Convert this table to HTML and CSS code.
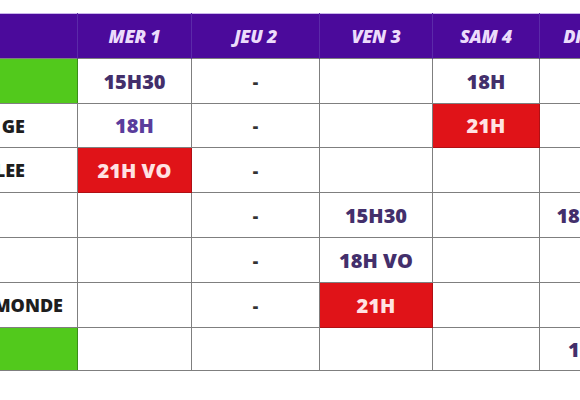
FILE: index.html
```html
<!DOCTYPE html>
<html lang="fr">
<head>
<meta charset="utf-8">
<title>Programme</title>
<link rel="stylesheet" href="styles.css">
</head>
<body>
<div class="frame">
  <table class="sched">
    <colgroup>
      <col class="c-title"><col class="c-mer"><col class="c-jeu"><col class="c-ven"><col class="c-sam"><col class="c-dim">
    </colgroup>
    <thead>
      <tr class="r-head">
        <th></th><th>MER 1</th><th>JEU 2</th><th>VEN 3</th><th>SAM 4</th><th>DIM 5</th>
      </tr>
    </thead>
    <tbody>
      <tr class="r1">
        <td class="title green"></td><td>15H30</td><td class="dash">-</td><td></td><td>18H</td><td></td>
      </tr>
      <tr class="r2">
        <td class="title">GE</td><td class="violet">18H</td><td class="dash">-</td><td></td><td class="red">21H</td><td></td>
      </tr>
      <tr class="r3">
        <td class="title">LEE</td><td class="red">21H VO</td><td class="dash">-</td><td></td><td></td><td></td>
      </tr>
      <tr class="r4">
        <td class="title"></td><td></td><td class="dash">-</td><td>15H30</td><td></td><td>18H30</td>
      </tr>
      <tr class="r5">
        <td class="title"></td><td></td><td class="dash">-</td><td>18H VO</td><td></td><td></td>
      </tr>
      <tr class="r6">
        <td class="title title-wide">MONDE</td><td></td><td class="dash">-</td><td class="red">21H</td><td></td><td></td>
      </tr>
      <tr class="r7">
        <td class="title green"></td><td></td><td></td><td></td><td></td><td>11H</td>
      </tr>
    </tbody>
  </table>
</div>
</body>
</html>
```

FILE: styles.css
```css
html, body {
  margin: 0;
  padding: 0;
  background: #ffffff;
}
body {
  width: 580px;
  height: 400px;
  overflow: hidden;
  font-family: "Open Sans", "Liberation Sans", sans-serif;
}
.frame {
  padding-top: 13px;
  margin-left: -80px;
}
.sched {
  table-layout: fixed;
  border-collapse: collapse;
  width: 715px;
}
.c-title { width: 157px; }
.c-mer { width: 114px; }
.c-jeu { width: 128px; }
.c-ven { width: 113px; }
.c-sam { width: 107px; }
.c-dim { width: 96px; }

.sched th {
  background: #4b0a9b;
  color: #ecdcfb;
  font-style: italic;
  font-weight: 800;
  font-size: 18px;
  letter-spacing: -0.3px;
  height: 44px;
  padding: 0;
  border-top: 1px solid #c9b4ea;
  border-left: 1px solid #5b2aa9;
  border-right: 1px solid #5b2aa9;
  text-align: center;
}
.sched td {
  border: 1px solid #7f7f7f;
  padding: 0;
  text-align: center;
  font-weight: 800;
  font-size: 20px;
  color: #432f6b;
  white-space: nowrap;
  overflow: hidden;
}
.r1 td { height: 44px; }
.r2 td { height: 43px; }
.r3 td { height: 44px; }
.r4 td { height: 44px; }
.r5 td { height: 44px; }
.r6 td { height: 44px; }
.r7 td { height: 42px; }

.sched td.title {
  text-align: right;
  padding-right: 52px;
  color: #1e1e1e;
  font-size: 18px;
  overflow: visible;
}
.sched td.title-wide { padding-right: 14px; }
.sched td.green {
  background: #52c91c;
  border-right-color: #3a8d18;
}
.sched td.violet { color: #5a3c9c; }
.sched td.red {
  background: #e01318;
  color: #ffe2e2;
  border-color: #b01014;
}
.sched td.dash {
  color: #333333;
  font-size: 17px;
}
```
